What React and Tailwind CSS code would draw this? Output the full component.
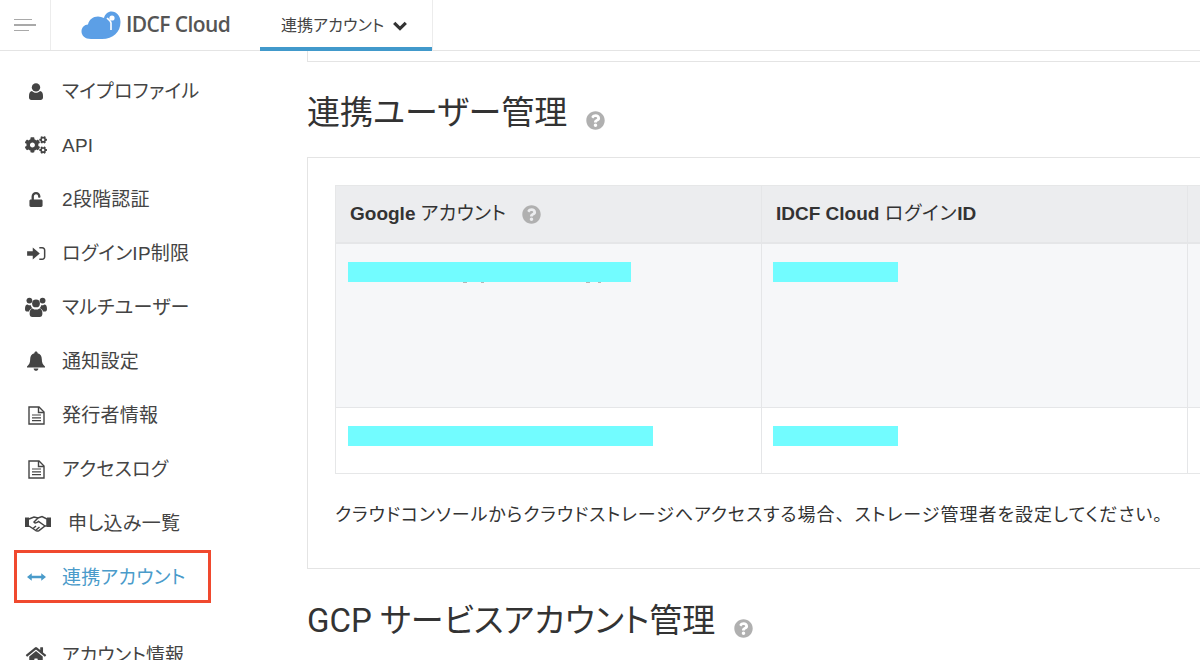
import React from 'react';
import { FaCogs, FaUnlock, FaHome, FaQuestionCircle } from 'react-icons/fa';

const font = "font-['Liberation_Sans','Noto_Sans_CJK_JP',sans-serif] [font-feature-settings:'palt']";

function ArrowsH() {
  return (
    <svg viewBox="0 0 20 10" className="w-[19px] h-[10px]" fill="currentColor">
      <path d="M0 5 L5 1 V3.8 H15 V1 L20 5 L15 9 V6.2 H5 V9 Z" />
    </svg>
  );
}

function SignIn() {
  return (
    <svg viewBox="0 0 20 16" className="w-[19px] h-[15px]" fill="currentColor">
      <path d="M0 5.5 H6 V1.5 L13.5 8 L6 14.5 V10.5 H0 Z" />
      <path d="M13 1 H16 C18.2 1 19.5 2.5 19.5 4.5 V11.5 C19.5 13.5 18.2 15 16 15 H13 V13.4 H16 C17.2 13.4 17.9 12.6 17.9 11.5 V4.5 C17.9 3.4 17.2 2.6 16 2.6 H13 Z" />
    </svg>
  );
}

function User() {
  return (
    <svg viewBox="0 0 14 17" className="w-[14px] h-[17px]" fill="currentColor">
      <circle cx="7" cy="4.4" r="4.2" />
      <path d="M3 8 C4 9.2 5.4 9.8 7 9.8 C8.6 9.8 10 9.2 11 8 C13 8.2 14 10 14 13 V14.5 C14 16 13 17 11.6 17 H2.4 C1 17 0 16 0 14.5 V13 C0 10 1 8.2 3 8 Z" />
    </svg>
  );
}

function Users() {
  return (
    <svg viewBox="0 0 22 20" className="w-[22px] h-[20px]" fill="currentColor">
      <circle cx="4.4" cy="3.6" r="2.9" />
      <circle cx="17.6" cy="3.6" r="2.9" />
      <circle cx="11" cy="6.4" r="3.9" />
      <path d="M0 12 C0 8.6 1 7.4 2.6 7.4 C3.6 8.2 4.8 8.4 5.8 8.2 C6 9.4 6.6 10.4 7.4 11.2 C5.6 11.6 4.4 12.8 4 14.4 H1.6 C0.6 14.4 0 13.6 0 12 Z" />
      <path d="M22 12 C22 8.6 21 7.4 19.4 7.4 C18.4 8.2 17.2 8.4 16.2 8.2 C16 9.4 15.4 10.4 14.6 11.2 C16.4 11.6 17.6 12.8 18 14.4 H20.4 C21.4 14.4 22 13.6 22 12 Z" />
      <path d="M7.6 11.4 C8.6 12.2 9.8 12.6 11 12.6 C12.2 12.6 13.4 12.2 14.4 11.4 C16.4 11.6 17.4 13.4 17.4 16.4 C17.4 18.6 16.4 20 14.6 20 H7.4 C5.6 20 4.6 18.6 4.6 16.4 C4.6 13.4 5.6 11.6 7.6 11.4 Z" />
    </svg>
  );
}

function Bell() {
  return (
    <svg viewBox="0 0 18 20" className="w-[18px] h-[20px]" fill="currentColor">
      <path d="M9 0.5 C10 0.5 10.6 1.2 10.6 2.2 C13.4 2.9 14.8 5.2 14.8 8 C14.8 11.6 15.8 13.6 18 15.6 V16.6 H0 V15.6 C2.2 13.6 3.2 11.6 3.2 8 C3.2 5.2 4.6 2.9 7.4 2.2 C7.4 1.2 8 0.5 9 0.5 Z" />
      <path d="M6.6 17.4 H11.4 C11.2 18.8 10.2 19.8 9 19.8 C7.8 19.8 6.8 18.8 6.6 17.4 Z" />
    </svg>
  );
}

function FileText() {
  return (
    <svg viewBox="0 0 17 19" className="w-[17px] h-[19px]" fill="none" stroke="currentColor" strokeWidth="1.4">
      <path d="M1 1 H11 L16 6 V18 H1 Z" />
      <path d="M10.5 1 V6.5 H16" />
      <path d="M4 9 H13 M4 11.8 H13 M4 14.6 H13" strokeWidth="1.2" />
    </svg>
  );
}

function Handshake() {
  return (
    <svg viewBox="0 0 26 18" className="w-[26px] h-[18px]" fill="none" stroke="currentColor" strokeWidth="1.5">
      <path d="M0 3.5 H4 V13 H0 Z M22 3.5 H26 V13 H22 Z" fill="currentColor" stroke="none" />
      <path d="M4 5 L9 3 L13 4 L17 2.5 L22 5 V12 H20 L14 16.6 Q12 17.8 10 16 L4 12" />
      <path d="M13 4 L9 8 Q10.5 10 13.5 7.5 L20 12 M11 16 L14.5 13 M8 14.5 L11 12" />
    </svg>
  );
}

function Chevron() {
  return (
    <svg viewBox="0 0 14 10" className="w-[14px] h-[10px]" fill="none" stroke="#333" strokeWidth="3.2">
      <path d="M1.2 1.8 L7 7.6 L12.8 1.8" />
    </svg>
  );
}

// Sidebar entries, top to bottom
const menuItems = [
  { label: 'マイプロファイル', icon: <User /> },
  { label: 'API', icon: <FaCogs className="w-[22px] h-[18px]" /> },
  { label: '2段階認証', icon: <FaUnlock className="w-[14px] h-[15px]" /> },
  { label: 'ログインIP制限', icon: <SignIn /> },
  { label: 'マルチユーザー', icon: <Users /> },
  { label: '通知設定', icon: <Bell /> },
  { label: '発行者情報', icon: <FileText /> },
  { label: 'アクセスログ', icon: <FileText /> },
  { label: '申し込み一覧', icon: <Handshake />, wide: true },
  { label: '連携アカウント', icon: <ArrowsH />, active: true },
];

function MenuRow({ item }) {
  return (
    <li
      className={`relative h-[54px] flex items-center pl-[25px] text-[19px] ${
        item.active ? 'text-[#4a9bca]' : 'text-[#444]'
      }`}
    >
      <span className={`flex items-center justify-center shrink-0 ${item.wide ? 'w-[26px] mr-[17px]' : 'w-[22px] mr-[15px]'}`}>
        {item.icon}
      </span>
      <span className="whitespace-nowrap tracking-[0.25px] pt-[2px]">{item.label}</span>
      {item.active && (
        <span className="absolute left-[14px] top-[0px] w-[197px] h-[53px] border-[3px] border-[#f0492e]" />
      )}
    </li>
  );
}

function Help({ className }) {
  return <FaQuestionCircle className={`text-[#b0b0b0] shrink-0 ${className}`} />;
}

function Redacted({ className }) {
  return <div className={`h-5 bg-[#72fcff] ${className}`} />;
}

export default function App() {
  return (
    <div className={`h-[660px] overflow-hidden bg-white text-[#333] ${font}`}>
      {/* Top bar */}
      <header className="h-[51px] flex border-b border-[#e4e4e4]">
        <div className="w-[51px] border-r border-[#ececec] flex items-center justify-center">
          <div className="flex flex-col gap-[4px] mr-[1px]">
            <span className="block w-[18px] h-[1.5px] bg-[#a9a9a9]" />
            <span className="block w-[22px] h-[1.5px] bg-[#a9a9a9]" />
            <span className="block w-[15px] h-[1.5px] bg-[#a9a9a9]" />
          </div>
        </div>
        <div className="w-[209px] flex items-center pl-[30px] gap-[5px]">
          <svg viewBox="0 0 40 30" className="w-[40px] h-[30px] -mt-[1px]">
            <path
              fill="#5c9fe6"
              d="M10 29 C4 29 0.5 25.5 0.5 21.5 C0.5 17.5 3.5 14.5 7 14.5 C8 9.5 12 6.5 17 6.5 C19 6.5 21 7 23 8 C24 4 27 1.5 30.5 1.5 C35.5 1.5 39.5 6 39.5 12 C39.5 22 32 29 21 29 Z"
            />
            <path d="M26 8 C28 10 29.5 10.5 30 13 V20" fill="none" stroke="#fff" strokeWidth="1.6" />
            <circle cx="31" cy="8" r="2.6" fill="#fff" />
          </svg>
          <span className="font-['Open_Sans',sans-serif] text-[21px] font-semibold tracking-[-0.6px] text-[#555] whitespace-nowrap">
            IDCF Cloud
          </span>
        </div>
        <div className="relative w-[173px] h-[51px] border-r border-[#ececec] flex items-center pl-[21px] gap-[9px] text-[16px] text-[#444]">
          <span className="whitespace-nowrap tracking-[0.1px]">連携アカウント</span>
          <Chevron />
          <span className="absolute left-0 right-0 bottom-0 h-[4px] bg-[#4199cb]" />
        </div>
      </header>

      <div className="flex">
        {/* Sidebar */}
        <aside className="w-[260px] shrink-0">
          <ul className="pt-[13px]">
            {menuItems.map(item => (
              <MenuRow key={item.label} item={item} />
            ))}
            <li className="h-[54px] mt-[24px] flex items-center pl-[25px] text-[19px] text-[#444]">
              <span className="w-[22px] mr-[15px] flex items-center justify-center shrink-0">
                <FaHome className="w-[22px] h-[18px]" />
              </span>
              <span className="whitespace-nowrap pt-[2px]">アカウント情報</span>
            </li>
          </ul>
        </aside>

        {/* Main content */}
        <main className="flex-1 min-w-0 pl-[47px]">
          <div className="h-[11px] border-l border-b border-[#e4e4e4]" />

          <div className="h-[95px] flex items-center font-['Roboto','Noto_Sans_CJK_JP',sans-serif]">
            <h2 className="text-[33px] font-normal whitespace-nowrap leading-none mt-[6px]">連携ユーザー管理</h2>
            <Help className="w-[19px] h-[19px] ml-[19px] mt-[22px]" />
          </div>

          <section className="h-[412px] border border-r-0 border-[#e4e4e4] pt-[27px] pl-[27px]">
            <div className="grid grid-cols-[426px_426px_1fr] border-t border-l border-b border-[#e6e7e8]">
              {/* Header row */}
              <div className="h-[58px] bg-[#ecedef] border-r border-b-2 border-[#e5e6e8] flex items-center pl-[14px] text-[19px] font-bold">
                <span className="whitespace-nowrap">Google <span className="font-normal tracking-[0.3px]">アカウント</span></span>
                <Help className="w-[19px] h-[19px] ml-[16px]" />
              </div>
              <div className="h-[58px] bg-[#ecedef] border-r border-b-2 border-[#e5e6e8] flex items-center pl-[14px] text-[19px] font-bold whitespace-nowrap">
                <span>IDCF Cloud <span className="font-normal tracking-[0.8px]">ログイン</span>ID</span>
              </div>
              <div className="h-[58px] bg-[#ecedef] border-b-2 border-[#e5e6e8]" />

              {/* Rows */}
              <div className="relative h-[164px] bg-[#f6f7f9] border-r border-b border-[#e5e6e8] pt-[18px] pl-[12px]">
                <Redacted className="w-[283px]" />
                <span className="absolute left-[127px] top-[38px] w-[4px] h-[1px] bg-[#b5b5b5]" />
                <span className="absolute left-[145px] top-[38px] w-[3px] h-[1px] bg-[#b5b5b5]" />
                <span className="absolute left-[250px] top-[38px] w-[4px] h-[1px] bg-[#b5b5b5]" />
                <span className="absolute left-[262px] top-[38px] w-[3px] h-[1px] bg-[#b5b5b5]" />
              </div>
              <div className="h-[164px] bg-[#f6f7f9] border-r border-b border-[#e5e6e8] pt-[18px] pl-[11px]">
                <Redacted className="w-[125px]" />
              </div>
              <div className="h-[164px] bg-[#f6f7f9] border-b border-[#e5e6e8]" />

              <div className="h-[65px] border-r border-[#e5e6e8] pt-[18px] pl-[12px]">
                <Redacted className="w-[305px]" />
              </div>
              <div className="h-[65px] border-r border-[#e5e6e8] pt-[18px] pl-[11px]">
                <Redacted className="w-[125px]" />
              </div>
              <div className="h-[65px]" />
            </div>
            <p className="mt-[28px] text-[18px] whitespace-nowrap">
              <span className="tracking-[0.95px]">クラウドコンソールからクラウドストレージへアクセスする</span>
              <span className="tracking-[1px]">場合<span className="[font-feature-settings:normal]">、</span>ストレージ管理者を設定してください<span className="[font-feature-settings:normal]">。</span></span>
            </p>
          </section>

          <div className="h-[40px] mt-[31px] flex items-center font-['Roboto','Noto_Sans_CJK_JP',sans-serif]">
            <h2 className="text-[33px] font-normal whitespace-nowrap leading-none">GCP サービスアカウント管理</h2>
            <Help className="w-[19px] h-[19px] ml-[19px] mt-[16px]" />
          </div>
        </main>
      </div>
    </div>
  );
}
